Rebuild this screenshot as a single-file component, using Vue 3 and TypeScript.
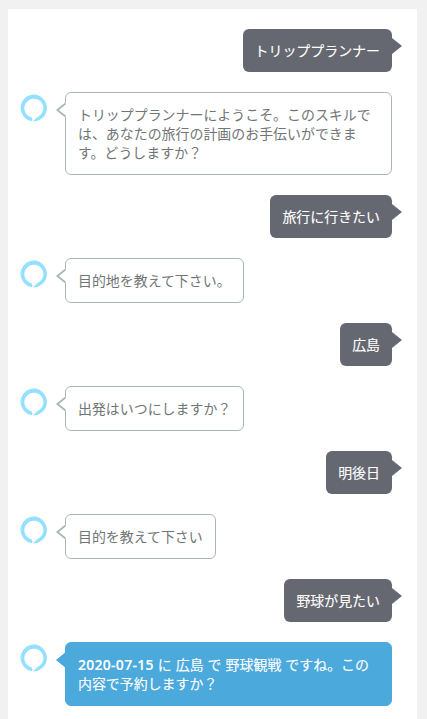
<script setup lang="ts">
interface Message {
  from: 'user' | 'bot'
  text: string
  date?: string
  active?: boolean
}

const messages: Message[] = [
  { from: 'user', text: 'トリッププランナー' },
  { from: 'bot', text: 'トリッププランナーにようこそ。このスキルでは、あなたの旅行の計画のお手伝いができます。どうしますか？' },
  { from: 'user', text: '旅行に行きたい' },
  { from: 'bot', text: '目的地を教えて下さい。' },
  { from: 'user', text: '広島' },
  { from: 'bot', text: '出発はいつにしますか？' },
  { from: 'user', text: '明後日' },
  { from: 'bot', text: '目的を教えて下さい' },
  { from: 'user', text: '野球が見たい' },
  { from: 'bot', date: '2020-07-15', text: ' に 広島 で 野球観戦 ですね。この内容で予約しますか？', active: true },
]
</script>

<template>
  <main class="chat">
    <div
      v-for="(message, index) in messages"
      :key="index"
      class="row"
      :class="[message.from, { active: message.active }]"
    >
      <svg v-if="message.from === 'bot'" class="avatar" viewBox="0 0 28 28" aria-hidden="true">
        <path
          fill="#94e1ff"
          fill-rule="evenodd"
          d="M14 .6A13.4 13.4 0 0 0 12.3 27.3V25C12.3 24.3 12 23.7 11.3 23.3A9.5 9.5 0 1 1 18.4 22.5C16.6 24 14.4 25.4 13 27.4A13.4 13.4 0 0 0 14 .6Z"
        />
      </svg>
      <div class="bubble">
        <p class="text"><span v-if="message.date" class="date">{{ message.date }}</span>{{ message.text }}</p>
        <svg v-if="message.from === 'user'" class="tail" viewBox="0 0 11 18" aria-hidden="true">
          <path d="M0 1L1 1L11 9L1 17H0Z" />
        </svg>
        <svg v-else class="tail" viewBox="0 0 11 18" aria-hidden="true">
          <path class="tail-fill" d="M11 1.5L2.4 9L11 16.5Z" />
          <path class="tail-line" d="M10.5 2.5L2.4 9L10.5 15.5" />
        </svg>
      </div>
    </div>
  </main>
</template>

<style>
body {
  margin: 0;
  background: #f1f1f1;
  overflow: hidden;
}
</style>

<style scoped>
.chat {
  box-sizing: border-box;
  height: 710px;
  margin: 9px 10px 0 8px;
  padding: 20px 25px 0 12px;
  display: flex;
  flex-direction: column;
  gap: 20px;
  background: #fff;
  font-family: "Open Sans", "Noto Sans CJK JP", sans-serif;
  font-size: 13.95px;
  line-height: 19px;
}
.row {
  display: flex;
  align-items: flex-start;
}
.row.user {
  justify-content: flex-end;
}
.avatar {
  width: 28px;
  height: 28px;
  margin: 2px 17px 0 0;
  flex: none;
}
.bubble {
  position: relative;
  padding: 12px;
  border-radius: 6px;
}
.text {
  margin: 0;
  line-break: strict;
}
.user .bubble {
  background: #656871;
  color: #fff;
  -webkit-text-stroke: 0.12px #fff;
}
.bot .bubble {
  border: 1px solid #aab7b8;
  background: #fff;
  color: #707575;
}
.active .bubble {
  border-color: #4ba9dc;
  background: #4ba9dc;
  color: #fff;
  word-spacing: 0.4px;
  -webkit-text-stroke: 0.12px #fff;
}
.date {
  font-weight: 600;
  letter-spacing: 0.3px;
}
.tail {
  position: absolute;
  width: 11px;
  height: 18px;
}
.user .tail {
  top: 8px;
  right: -10px;
  fill: #656871;
}
.bot .tail {
  top: 8px;
  left: -11px;
}
.tail-fill {
  fill: #fff;
}
.tail-line {
  fill: none;
  stroke: #aab7b8;
  stroke-width: 1.8;
}
.active .tail-fill {
  fill: #4ba9dc;
}
.active .tail-line {
  stroke: #4ba9dc;
}
</style>
